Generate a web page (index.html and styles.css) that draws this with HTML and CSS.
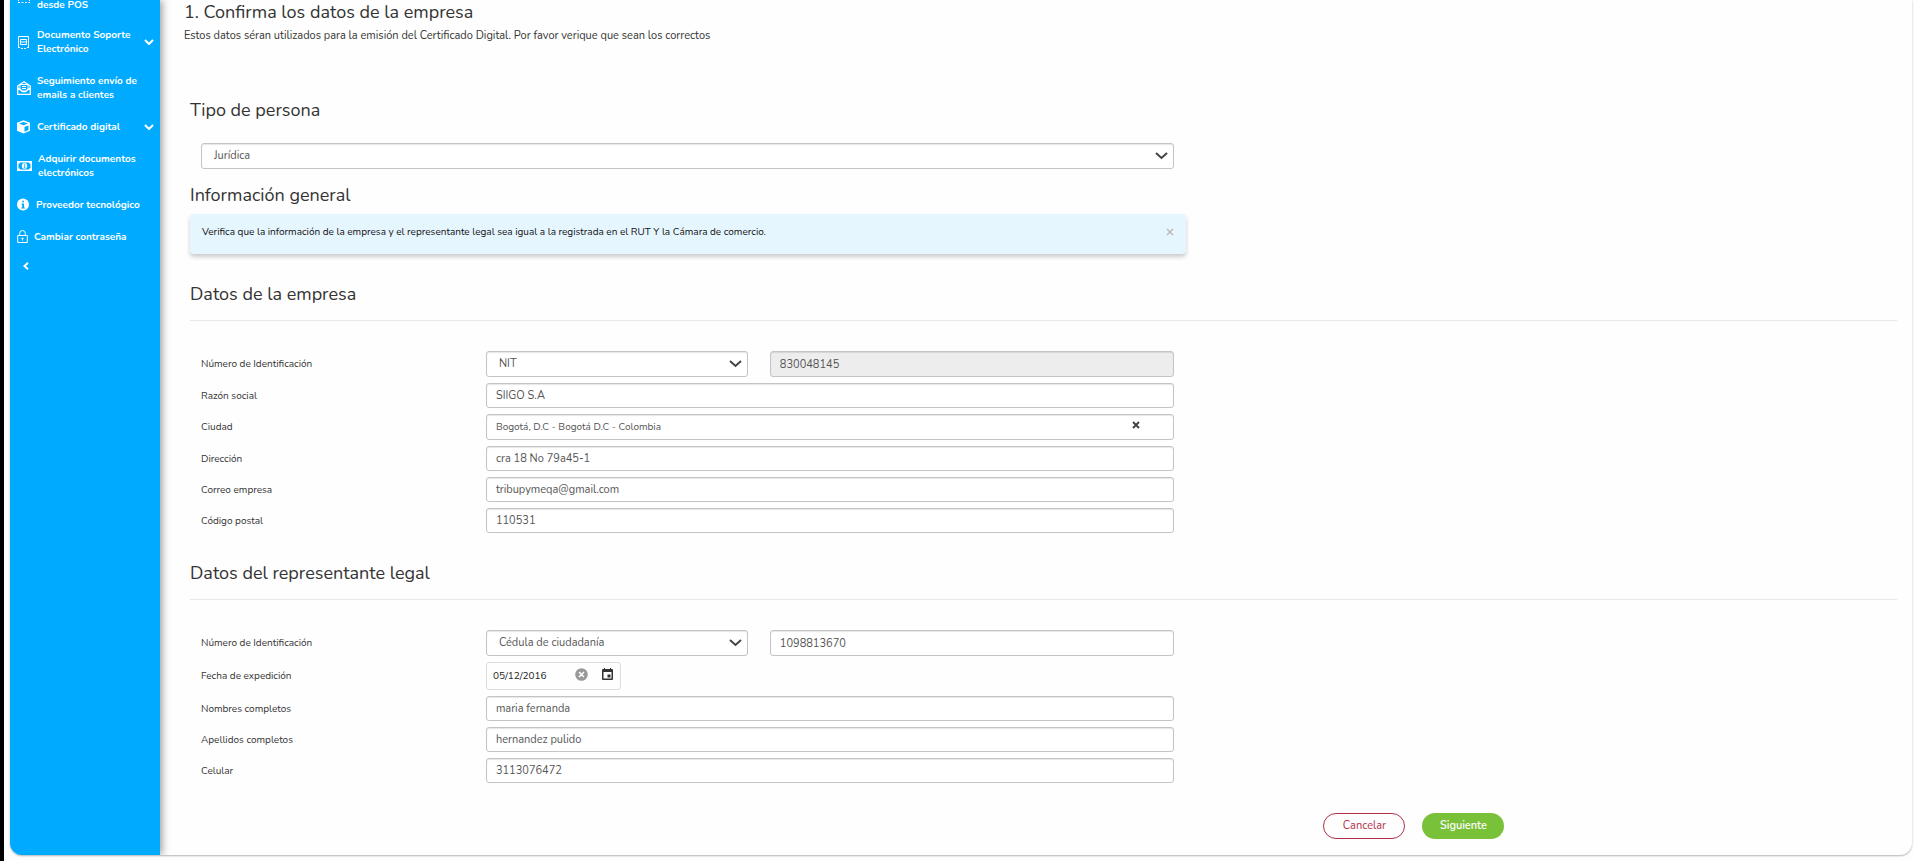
FILE: index.html
```
<!DOCTYPE html>
<html lang="es">
<head>
<meta charset="utf-8">
<title>Certificado digital</title>
<meta name="viewport" content="width=device-width, initial-scale=1">
<link rel="stylesheet" href="styles.css">
</head>
<body>

<div class="card">

	<nav class="sidebar">
		<a href="#" class="item item-first">
			<svg class="icon" viewBox="0 0 14 14"><path d="M1.500 11V1h11v10" fill="none" stroke="currentColor"/><path d="M1 12.500h2M4.500 12.500h2M8 12.500h2M11.500 12.500h1.500" stroke="currentColor"/></svg>
			<span>desde POS</span>
		</a>
		<a href="#" class="item">
			<svg class="icon" viewBox="0 0 14 14"><path d="M1.500 12V1.500h10V12M3.500 4.500h6v5h-6zM4 7h5" fill="none" stroke="currentColor"/><path d="M1 12.500h2M4 13.500h2M7 13.500h2M10 12.500h2" stroke="currentColor"/></svg>
			<span>Documento Soporte<br>Electrónico</span>
			<svg class="chevron" viewBox="0 0 10 6"><path d="M1 1l4 4 4-4"/></svg>
		</a>
		<a href="#" class="item">
			<svg class="icon" viewBox="0 0 14 14"><path d="M.700 5L7 .800 13.300 5v8.300H.700zM1 7l4.500 3.500h3L13 7" fill="none" stroke="currentColor" stroke-width="1.300"/><path d="M3 8V3.500h8V8L8.500 10h-3zM5 5.500h4M5 7.500h4" fill="none" stroke="currentColor"/></svg>
			<span>Seguimiento envío de<br>emails a clientes</span>
		</a>
		<a href="#" class="item">
			<svg class="icon" viewBox="0 0 14 14"><path d="M6.500 .300L13 2.700v8L6.500 13.500 0 10.700v-8z" fill="currentColor"/><path d="M6.500 2L11 3.500 6.500 5.300 2 3.500zM7.500 7l4-1.600v4.500l-4 1.800z" fill="#0af"/></svg>
			<span>Certificado digital</span>
			<svg class="chevron" viewBox="0 0 10 6"><path d="M1 1l4 4 4-4"/></svg>
		</a>
		<a href="#" class="item">
			<svg class="icon icon-wide" viewBox="0 0 15 14"><path d="M0 2h15v10H0z" fill="currentColor"/><path d="M3 3.500h9a2 2 0 0 0 1.500 1.500v4A2 2 0 0 0 12 10.500H3A2 2 0 0 0 1.500 9V5A2 2 0 0 0 3 3.500z" fill="#0af"/><ellipse cx="7.500" cy="7" rx="2.700" ry="3" fill="currentColor"/><path d="M6.800 5.800l.9-.6V9M6.500 9h2" fill="none" stroke="#0af" stroke-width=".8"/></svg>
			<span>Adquirir documentos<br>electrónicos</span>
		</a>
		<a href="#" class="item item-narrow">
			<svg class="icon" viewBox="0 0 14 14"><circle cx="6" cy="6.500" r="6" fill="currentColor"/><path d="M5.200 2.700h1.800v1.600H5.200zM4.500 5.500h2.500v4h1v1H4.300v-1h.9v-3h-.7z" fill="#0af"/></svg>
			<span>Proveedor tecnológico</span>
		</a>
		<a href="#" class="item item-narrow">
			<svg class="icon icon-lock" viewBox="0 0 12 14"><path d="M.700 5.500h9.600v7H.700zM2.700 5.500V3.300a2.800 2.800 0 0 1 5.600 0v2.200" fill="none" stroke="currentColor"/><path d="M5.500 8v2.500M4.300 8.300h2.400" stroke="currentColor"/></svg>
			<span>Cambiar contraseña</span>
		</a>
		<button type="button" class="collapse" aria-label="Contraer menú">
			<svg viewBox="0 0 6 8"><path d="M5 .8L1.500 4 5 7.200"/></svg>
		</button>
	</nav>

	<main class="main">
		<h1>1. Confirma los datos de la empresa</h1>
		<p class="intro">Estos datos séran utilizados para la emisión del Certificado Digital. Por favor verique que sean los correctos</p>

		<form class="form">
			<h2 id="tipo-title">Tipo de persona</h2>
			<div class="column padded">
				<div class="select">
					<select aria-labelledby="tipo-title"><option>Jurídica</option></select>
					<svg class="arrow" viewBox="0 0 13 8"><path d="M1 1l5.500 5L12 1"/></svg>
				</div>
			</div>

			<h2 class="general">Información general</h2>
			<div class="column alert">
				<span>Verifica que la información de la empresa y el representante legal sea igual a la registrada en el RUT Y la Cámara de comercio.</span>
				<button type="button" aria-label="Cerrar">
					<svg viewBox="0 0 8 8"><path d="M1 1l6 6M7 1L1 7"/></svg>
				</button>
			</div>

			<h2 class="section">Datos de la empresa</h2>
			<div class="column padded fields">
				<div class="row">
					<label for="tipo-id">Número de Identificación</label>
					<div class="pair">
						<div class="select">
							<select id="tipo-id"><option>NIT</option></select>
							<svg class="arrow" viewBox="0 0 13 8"><path d="M1 1l5.500 5L12 1"/></svg>
						</div>
						<input type="text" value="830048145" aria-label="Número" disabled>
					</div>
				</div>
				<div class="row">
					<label for="razon">Razón social</label>
					<input type="text" id="razon" value="SIIGO S.A">
				</div>
				<div class="row">
					<label for="ciudad">Ciudad</label>
					<div class="search">
						<input type="text" id="ciudad" value="Bogotá, D.C - Bogotá D.C - Colombia">
						<button type="button" aria-label="Borrar ciudad">
							<svg viewBox="0 0 8 8"><path d="M1 1l6 6M7 1L1 7"/></svg>
						</button>
					</div>
				</div>
				<div class="row">
					<label for="direccion">Dirección</label>
					<input type="text" id="direccion" value="cra 18 No 79a45-1">
				</div>
				<div class="row">
					<label for="correo">Correo empresa</label>
					<input type="text" id="correo" value="tribupymeqa@gmail.com">
				</div>
				<div class="row">
					<label for="postal">Código postal</label>
					<input type="text" id="postal" value="110531">
				</div>
			</div>

			<h2 class="section">Datos del representante legal</h2>
			<div class="column padded fields">
				<div class="row">
					<label for="rep-tipo">Número de Identificación</label>
					<div class="pair">
						<div class="select">
							<select id="rep-tipo"><option>Cédula de ciudadanía</option></select>
							<svg class="arrow" viewBox="0 0 13 8"><path d="M1 1l5.500 5L12 1"/></svg>
						</div>
						<input type="text" value="1098813670" aria-label="Número">
					</div>
				</div>
				<div class="row">
					<label for="fecha">Fecha de expedición</label>
					<div class="date">
						<input type="text" id="fecha" value="05/12/2016">
						<button type="button" aria-label="Borrar fecha">
							<svg viewBox="0 0 13 13"><circle cx="6.500" cy="6.500" r="6.300" fill="#999"/><path d="M4 4l5 5M9 4L4 9" stroke="#fff" stroke-width="1.500"/></svg>
						</button>
						<button type="button" aria-label="Abrir calendario">
							<svg viewBox="0 0 13 13"><path d="M2 1h1V0h1v1h5V0h1v1h1q1 0 1 1v9q0 1-1 1H2q-1 0-1-1V2q0-1 1-1zM2.500 4v6.500h8V4z" fill="#333" fill-rule="evenodd"/><path d="M6.500 6.500h3v3h-3z" fill="#333"/></svg>
						</button>
					</div>
				</div>
				<div class="row">
					<label for="nombres">Nombres completos</label>
					<input type="text" id="nombres" value="maria fernanda">
				</div>
				<div class="row">
					<label for="apellidos">Apellidos completos</label>
					<input type="text" id="apellidos" value="hernandez pulido">
				</div>
				<div class="row">
					<label for="celular">Celular</label>
					<input type="text" id="celular" value="3113076472">
				</div>
			</div>

			<div class="actions">
				<button type="button" class="btn btn-cancel">Cancelar</button>
				<button type="submit" class="btn btn-next">Siguiente</button>
			</div>
		</form>
	</main>

</div>

</body>
</html>
```
FILE: styles.css
```
* {
	box-sizing: border-box;
}
body {
	min-height: 100vh;
	margin: 0;
	padding: 0 2px 4px 6px;
	border-left: 4px solid #000;
	background-color: #fefefe;
	color: #333;
	font-family: Nunito, Lato, sans-serif;
	font-size: 11px;
	line-height: 14px;
}
button {
	padding: 0;
	border: 0;
	background: none;
	color: inherit;
	font: inherit;
	cursor: pointer;
}
svg {
	display: block;
}

.card {
	display: flex;
	overflow: hidden;
	border-radius: 0 0 12px 12px;
	box-shadow: 0 1px 2px rgba(0,0,0,0.3);
}

/* Blue side menu */
.sidebar {
	display: flex;
	flex: none;
	flex-direction: column;
	gap: 18px;
	width: 150px;
	padding: 0 6px 0 7px;
	background-color: #0af;
	box-shadow: 2px 0 8px rgba(0,0,0,0.4);
	color: #fff;
	font-size: 10px;
	font-weight: bold;
}
.item {
	display: flex;
	align-items: center;
	gap: 6px;
	color: #fff;
	text-decoration: none;
	white-space: nowrap;
}
.item-first {
	align-items: flex-end;
	height: 10px;
	line-height: 10px;
}
.item-first .icon {
	margin-bottom: 6px;
}
.item-narrow {
	gap: 5px;
}
.icon {
	flex: none;
	width: 14px;
	height: 14px;
}
.icon-wide {
	width: 15px;
}
.icon-lock {
	width: 12px;
}
.chevron {
	width: 10px;
	height: 6px;
	margin-left: auto;
	fill: none;
	stroke: currentColor;
	stroke-width: 2;
}
.collapse {
	width: 18px;
	height: 8px;
}
.collapse svg {
	width: 6px;
	height: 8px;
	margin: auto;
	fill: none;
	stroke: currentColor;
	stroke-width: 2;
}

.main {
	flex: 1;
	padding: 0 15px 16px 24px;
}
h1, h2 {
	margin: 0;
	font-size: 18px;
	font-weight: normal;
	line-height: 24px;
}
.intro {
	margin: 5px 0 0;
}
.form {
	padding: 55px 0 0 6px;
}

/* 7 of 12 columns */
.column {
	width: 58.333%;
}
.padded {
	padding: 0 12px 0 11px;
}
h2 + .padded {
	margin-top: 21px;
}
.general {
	margin-top: 14px;
}
.section {
	margin-top: 28px;
	padding-bottom: 14px;
	border-bottom: 1px solid #e8e8e8;
}
h2.section + .padded {
	margin-top: 30px;
}

.alert {
	display: flex;
	align-items: center;
	justify-content: space-between;
	height: 40px;
	margin-top: 7px;
	padding: 0 12px 4px 12px;
	border-radius: 4px;
	background-color: #e6f6ff;
	box-shadow: 0 3px 4px rgba(0,0,0,0.2);
	color: #111;
	font-size: 10px;
}
.alert svg {
	width: 8px;
	height: 8px;
	stroke: #bbb;
	stroke-width: 1.5;
}

.fields {
	display: grid;
	gap: 6px;
}
.row {
	display: grid;
	grid-template-columns: 285fr 688fr;
	align-items: center;
}
.row label {
	font-size: 10px;
}
.pair {
	display: grid;
	grid-template-columns: 262fr 404fr;
	gap: 22px;
}

input, select {
	width: 100%;
	min-width: 0;
	height: 25px;
	padding: 0 9px;
	border: 1px solid #c4c4c4;
	border-radius: 3px;
	background-color: #fff;
	box-shadow: inset 0 1px 1px rgba(0,0,0,0.1);
	color: #555;
	font: inherit;
}
select {
	height: 26px;
	padding: 0 12px;
	-webkit-appearance: none;
	appearance: none;
}
.pair input, .search input {
	height: 26px;
}
input:disabled {
	background-color: #ededed;
}

/* Icons share the grid cell of the field they belong to */
.select, .search {
	display: grid;
	align-items: center;
}
.select > *, .search > * {
	grid-area: 1 / 1;
}
.arrow {
	justify-self: end;
	width: 13px;
	height: 8px;
	margin-right: 6px;
	fill: none;
	stroke: #444;
	stroke-width: 2;
	pointer-events: none;
}
.search input {
	font-size: 10px;
}
.search button {
	justify-self: end;
	margin: 0 34px 4px 0;
}
.search svg {
	width: 8px;
	height: 8px;
	stroke: #444;
	stroke-width: 2;
}

.date {
	display: flex;
	align-items: center;
	gap: 13px;
	width: 135px;
	height: 28px;
	padding: 0 6px;
	border: 1px solid #ddd;
	border-radius: 3px;
}
.date input {
	flex: 1;
	padding: 0;
	border: 0;
	background: none;
	box-shadow: none;
	color: #222;
	font-size: 10px;
}
.date button {
	margin-bottom: 3px;
}
.date svg {
	width: 13px;
	height: 13px;
}

.actions {
	display: flex;
	gap: 17px;
	margin-top: 30px;
	margin-left: 66.4%;
}
.btn {
	width: 82px;
	height: 26px;
	border-radius: 13px;
}
.btn-cancel {
	border: 1px solid #b0304a;
	color: #b0304a;
}
.btn-next {
	background-color: #7ac13a;
	color: #fff;
	font-weight: 600;
}
```
